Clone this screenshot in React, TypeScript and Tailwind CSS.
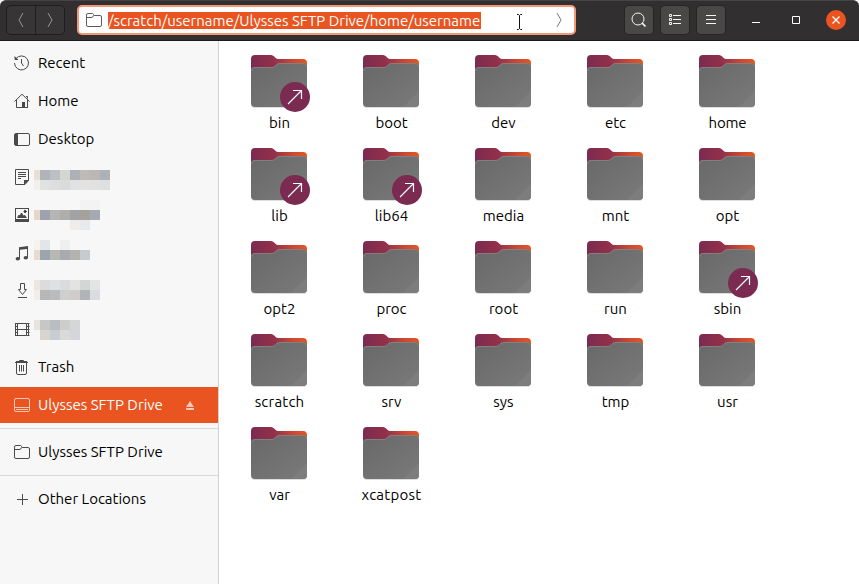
import React from "react";

const FONT = "font-['Ubuntu','Noto_Sans',sans-serif]";

type Place = { name: string; link?: boolean; tracking?: string };

const folders: Place[] = [
  { name: "bin", link: true },
  { name: "boot" },
  { name: "dev" },
  { name: "etc" },
  { name: "home", tracking: "tracking-[-0.2px]" },
  { name: "lib", link: true },
  { name: "lib64", link: true },
  { name: "media" },
  { name: "mnt" },
  { name: "opt" },
  { name: "opt2" },
  { name: "proc" },
  { name: "root" },
  { name: "run" },
  { name: "sbin", link: true },
  { name: "scratch", tracking: "tracking-[0.2px]" },
  { name: "srv" },
  { name: "sys" },
  { name: "tmp" },
  { name: "usr" },
  { name: "var" },
  { name: "xcatpost", tracking: "tracking-[0.25px]" },
];

function Icon({ children }: { children: React.ReactNode }) {
  return (
    <svg className="block h-4 w-4 shrink-0" viewBox="0 0 16 16" fill="none" stroke="currentColor" strokeWidth="1">
      {children}
    </svg>
  );
}

const RecentIcon = () => (
  <Icon>
    <path d="M2 3.600A7 7 0 1 1 .5 8" />
    <path d="M.5 1v3.500H4z" fill="currentColor" stroke="none" />
    <path d="M1 4.500h3M7.500 4v4l2 3" />
  </Icon>
);
const HomeIcon = () => (
  <Icon>
    <path d="M.5 8.500 8 1.200l7.500 7.300M2.500 7v7.500H8M13.500 14.500V7M13.500 5.500v-2H12" />
    <path d="M8 9h3v6H8zM11 14h3v1h-3z" fill="currentColor" stroke="none" />
  </Icon>
);
const DesktopIcon = () => (
  <Icon>
    <rect x=".5" y="2.500" width="15" height="12" rx="1.500" />
    <path d="M1 3h3v11H1z" fill="currentColor" stroke="none" />
  </Icon>
);
const DocumentIcon = () => (
  <Icon>
    <path d="M1.500.5h13v11l-3.500 4H1.500z" />
    <path d="M4 3.500h8M4 5.500h8M4 7.500h8M4 9.500h3" />
    <path d="M10 11h5l-5 5z" fill="currentColor" stroke="none" />
  </Icon>
);
const PictureIcon = () => (
  <Icon>
    <rect x="1.500" y="1.500" width="13" height="12" />
    <path d="M1 12h14v3H1zM3 11l1.500-3H6l1-2h1l1.500 2.500L11 8l2 3zM10 3h2v1h1v1h-1v1h-2V5h-.5V4h.5z" fill="currentColor" stroke="none" />
  </Icon>
);
const MusicIcon = () => (
  <Icon>
    <path d="M5 2.200 14 1v12h-1V4L6 4.800V14H5z" fill="currentColor" stroke="none" />
    <ellipse cx="3.800" cy="13.800" rx="2.200" ry="1.800" fill="currentColor" stroke="none" />
    <ellipse cx="11.800" cy="12.800" rx="2.200" ry="1.800" fill="currentColor" stroke="none" />
  </Icon>
);
const DownloadIcon = () => (
  <Icon>
    <path d="M6.500.5h4v6h2l-4 5-4-5h2zM4 14.500h9" />
  </Icon>
);
const VideoIcon = () => (
  <Icon>
    <path d="M3.500 2.500h9v12h-9zM3.500 8.500h9M1.500 2v13M14.500 2v13" />
    <path d="M1 2.500h3M1 5.500h3M1 8.500h3M1 11.500h3M1 14.500h3M12.500 2.500h3M12.500 5.500h3M12.500 8.500h3M12.500 11.500h3M12.500 14.500h3" />
  </Icon>
);
const TrashIcon = () => (
  <Icon>
    <path d="M1 3.500h13M5.500 3V1.500h4V3M2.500 4v10q0 1.500 1.500 1.500h7q1.500 0 1.500-1.500V4M5.500 6v6.500M7.500 6v6.500M9.500 6v6.500" />
    <path d="M2 2.500h11" />
  </Icon>
);
const DriveIcon = () => (
  <Icon>
    <rect x=".5" y="1.500" width="15" height="13" rx="1.500" />
    <path d="M1 10.500h14M2 12.500h12" />
  </Icon>
);
const FolderIcon = () => (
  <Icon>
    <path d="M.5 3q0-1.500 1.500-1.500h4.500q.8 0 1 1l.5 1H14q1.500 0 1.500 1.500v8q0 1.500-1.500 1.500H2Q.5 14.500.5 13zM.5 5.500H6q.8 0 1.500-2" />
  </Icon>
);
const PlusIcon = () => (
  <Icon>
    <path d="M3 8.500h11M8.500 3v11" />
  </Icon>
);

type Cell = string | null;

function Mosaic({ rows }: { rows: Cell[][] }) {
  return (
    <div className="flex flex-col">
      {rows.map((row, r) => (
        <div key={r} className="flex h-[10px]">
          {row.map((color, c) => (
            <span key={c} className={c === 0 ? "w-[6px]" : "w-[10px]"} style={{ backgroundColor: color ?? "transparent" }} />
          ))}
        </div>
      ))}
    </div>
  );
}

const blurred: { icon: React.ReactNode; pad: string; rows: Cell[][] }[] = [
  {
    icon: <DocumentIcon />,
    pad: "pt-[11px]",
    rows: [
      ["#e8dfd5", "#b0b3b8", "#bcc0c3", "#d6d6d1", "#aeb0b5", "#bcbbb9", "#b9b8b5", "#aeb2b6"],
      ["#f1f0ed", "#e0e1e1", "#dededf", "#dadbdc", "#e0e1e1", "#e2e2e2", "#e1e1e0", "#dddfe1"],
    ],
  },
  {
    icon: <PictureIcon />,
    pad: "pt-[3px]",
    rows: [
      [null, null, null, null, null, "#f3f3f3", "#f3f3f3"],
      ["#e5d8ca", "#9ca3ac", "#b5b5b5", "#b0adab", "#a1a2a3", "#a5a29c", "#a5aab2"],
      [null, null, null, null, "#eeedec", "#e7e9eb"],
    ],
  },
  {
    icon: <MusicIcon />,
    pad: "pt-[5px]",
    rows: [
      ["#f6f2ee", "#e3e6e8", "#f8f8f8", "#eeefef"],
      ["#e5dbcf", "#9ba5ae", "#b7b7b4", "#a9aaad", "#b4b2af", "#c7cbce"],
    ],
  },
  {
    icon: <DownloadIcon />,
    pad: "pt-[7px]",
    rows: [
      ["#ece6e1", "#dadcde", "#dfe0e3", "#dadbdc", "#e3e3e2", "#d4d5d5", "#e3e4e6"],
      ["#f0eeeb", "#b7b7b7", "#babbbc", "#cecfce", "#cfccca", "#b0b5b9", "#dbdcdf"],
    ],
  },
  {
    icon: <VideoIcon />,
    pad: "pt-[9px]",
    rows: [
      ["#e8e3dc", "#c7c7c5", "#b7bdc3", "#cdcecc", "#d4d6d8"],
      [null, "#d8d5cf", "#c9ccd0", "#dadad9", "#d4d6d9"],
    ],
  },
];

function SidebarRow({ icon, label, active }: { icon: React.ReactNode; label: string; active?: boolean }) {
  return (
    <div className={`flex h-9 items-center pl-[14px] ${active ? "bg-[#e95420] text-white" : "text-black"}`}>
      <span className={active ? "text-[#f8c8b5]" : "text-[#4a4a4a]"}>{icon}</span>
      <span className="ml-2 whitespace-nowrap">{label}</span>
      {active && (
        <svg className="mr-[24px] ml-auto h-[9px] w-2" viewBox="0 0 8 9" fill="#f8c8b5">
          <path d="M4 0 8 6H0zM0 7h8v2H0z" />
        </svg>
      )}
    </div>
  );
}

function Sidebar() {
  return (
    <aside className="flex w-[219px] shrink-0 flex-col border-r border-[#d2d2d2] bg-[#f7f7f7] pt-1">
      <div className="flex flex-col gap-[2px]">
        <SidebarRow icon={<RecentIcon />} label="Recent" />
        <SidebarRow icon={<HomeIcon />} label="Home" />
        <SidebarRow icon={<DesktopIcon />} label="Desktop" />
        {blurred.map((b, i) => (
          <div key={i} className="flex h-9 pl-[14px]">
            <span className="mr-1 pt-[10px] text-[#4a4a4a]">{b.icon}</span>
            <div className={b.pad}>
              <Mosaic rows={b.rows} />
            </div>
          </div>
        ))}
        <SidebarRow icon={<TrashIcon />} label="Trash" />
        <SidebarRow icon={<DriveIcon />} label="Ulysses SFTP Drive" active />
      </div>
      <div className="mt-[5px] mb-[5px] h-px bg-[#d9d9d9]" />
      <SidebarRow icon={<FolderIcon />} label="Ulysses SFTP Drive" />
      <div className="mt-[5px] mb-[5px] h-px bg-[#d9d9d9]" />
      <SidebarRow icon={<PlusIcon />} label="Other Locations" />
    </aside>
  );
}

function FolderTile({ name, link, tracking = "" }: Place) {
  return (
    <div className="flex h-[93px] w-28 flex-col items-center">
      <div className="relative h-[58px] w-14">
        <svg className="block h-[58px] w-14" viewBox="0 0 56 58">
          <path d="M0 4q0-4 4-4h16q2 0 3.200 1.500l1.200 1.300q1 1.200 3 1.200H52q4 0 4 4v10H0z" fill="url(#folder-back)" />
          <path d="M0 16q0-4 4-4h17q2 0 3.300-1.500l1.400-1.400Q27 8 29 8h23q4 0 4 4v37q0 4-4 4H4q-4 0-4-4z" fill="#9d9d9d" opacity=".35" />
          <path d="M0 16q0-4 4-4h17q2 0 3.300-1.500l1.400-1.400Q27 8 29 8h23q4 0 4 4v36q0 4-4 4H4q-4 0-4-4z" fill="url(#folder-front)" />
          <path d="M.5 16q0-3.500 3.500-3.500h17q2 0 3.300-1.500l1.400-1.400Q27 8.500 29 8.500h23q3.500 0 3.500 3.500" fill="none" stroke="#808080" />
          <path d="M56 36v12q0 4-4 4H40z" fill="#7d7d7d" />
        </svg>
        {link && (
          <svg className="absolute top-[27px] left-[29px] h-[30px] w-[30px]" viewBox="0 0 30 30">
            <circle cx="15" cy="15" r="15" fill="#7b2a51" />
            <path d="M8 22 21.500 8.500M13 8.500h8.500V17" fill="none" stroke="#fff" strokeWidth="1.200" />
          </svg>
        )}
      </div>
      <span className={`ml-px leading-5 whitespace-nowrap ${tracking}`}>{name}</span>
    </div>
  );
}

function HeaderButton({ children }: { children: React.ReactNode }) {
  return (
    <div className="flex h-[30px] w-[30px] items-center justify-center rounded-[5px] border border-[#262424] bg-[#494846] text-[#f5f5f5]">
      {children}
    </div>
  );
}

function Header() {
  return (
    <header className="flex h-[41px] shrink-0 items-start rounded-t-[6px] border-t border-b border-t-[#454345] border-b-[#1b191a] bg-[#322f30] pt-1 pl-[6px]">
      <div className="flex h-[30px] w-[59px] rounded-[5px] border border-[#1f1d1e] bg-[#383536] text-[#969594]">
        <div className="flex w-[29px] items-center justify-center border-r border-[#1f1d1e]">
          <svg className="h-4 w-4" viewBox="0 0 16 16" fill="none" stroke="currentColor">
            <path d="M10 1 6 8l4 7" />
          </svg>
        </div>
        <div className="flex flex-1 items-center justify-center">
          <svg className="h-4 w-4" viewBox="0 0 16 16" fill="none" stroke="currentColor">
            <path d="m6 1 4 7-4 7" />
          </svg>
        </div>
      </div>
      <div className="relative ml-3 flex h-[30px] w-[499px] items-center rounded-[5px] border-2 border-[#f29879] bg-white pl-[7px]">
        <span className="text-[#5c5c5c]">
          <FolderIcon />
        </span>
        <span className="ml-[6px] h-[17px] w-[373px] bg-[#e95420] leading-[17px] whitespace-nowrap text-white">
          /scratch/username/Ulysses SFTP Drive/home/username
        </span>
        <svg className="absolute top-[7px] left-[437px] h-[16px] w-[7px]" viewBox="0 0 7 16" fill="none" stroke="#111">
          <path d="M1 .5h1.500l1 1 1-1H6M3.500 1.500v13M1 15.500h1.500l1-1 1 1H6" />
        </svg>
        <svg className="mr-[7px] ml-auto h-4 w-4" viewBox="0 0 16 16" fill="none" stroke="#777">
          <path d="m6 1 4 7-4 7" />
        </svg>
      </div>
      <div className="ml-12 flex gap-[6px]">
        <HeaderButton>
          <svg className="h-4 w-4" viewBox="0 0 16 16" fill="none" stroke="currentColor">
            <circle cx="7" cy="7" r="6" />
            <path d="m11 11 3.500 3.500" strokeWidth="1.700" />
          </svg>
        </HeaderButton>
        <HeaderButton>
          <svg className="h-4 w-4" viewBox="0 0 16 16" fill="none" stroke="currentColor">
            <path d="M2.500 2.500h2v2h-2zM2.500 6.500h2v2h-2zM2.500 10.500h2v2h-2zM6 3.500h8M6 7.500h8M6 11.500h8" />
          </svg>
        </HeaderButton>
        <HeaderButton>
          <svg className="h-4 w-4" viewBox="0 0 16 16" fill="none" stroke="currentColor">
            <path d="M3 3.500h10M3 7.500h10M3 11.500h10" />
          </svg>
        </HeaderButton>
      </div>
      <div className="ml-[22px] flex h-[30px] items-center text-white">
        <svg className="h-4 w-4" viewBox="0 0 16 16" fill="none" stroke="currentColor">
          <path d="M4 10.500h8" />
        </svg>
        <svg className="ml-6 h-4 w-4" viewBox="0 0 16 16" fill="none" stroke="currentColor">
          <path d="M4.500 4.500h7v7h-7z" />
        </svg>
        <svg className="ml-[22px] h-5 w-5" viewBox="0 0 20 20">
          <circle cx="10" cy="10" r="10" fill="#e95420" />
          <path d="m6.500 6.500 7 7m0-7-7 7" stroke="#fff" strokeWidth="1.300" />
        </svg>
      </div>
    </header>
  );
}

export default function App() {
  return (
    <div className={`flex h-[584px] w-[859px] flex-col overflow-hidden bg-white text-[15px] text-black ${FONT}`}>
      <svg className="absolute h-0 w-0" aria-hidden="true">
        <defs>
          <linearGradient id="folder-back">
            <stop offset="0" stopColor="#7b2a51" />
            <stop offset=".42" stopColor="#94304a" />
            <stop offset=".75" stopColor="#ce4831" />
            <stop offset="1" stopColor="#e95420" />
          </linearGradient>
          <linearGradient id="folder-front" x1="0" y1="0" x2="1" y2="1">
            <stop offset="0" stopColor="#686868" />
            <stop offset="1" stopColor="#7a7a7a" />
          </linearGradient>
        </defs>
      </svg>
      <Header />
      <div className="flex min-h-0 flex-1">
        <Sidebar />
        <main className="flex-1 pt-[14px] pl-1">
          <div className="grid w-[560px] grid-cols-5">
            {folders.map((f) => (
              <FolderTile key={f.name} {...f} />
            ))}
          </div>
        </main>
      </div>
    </div>
  );
}
